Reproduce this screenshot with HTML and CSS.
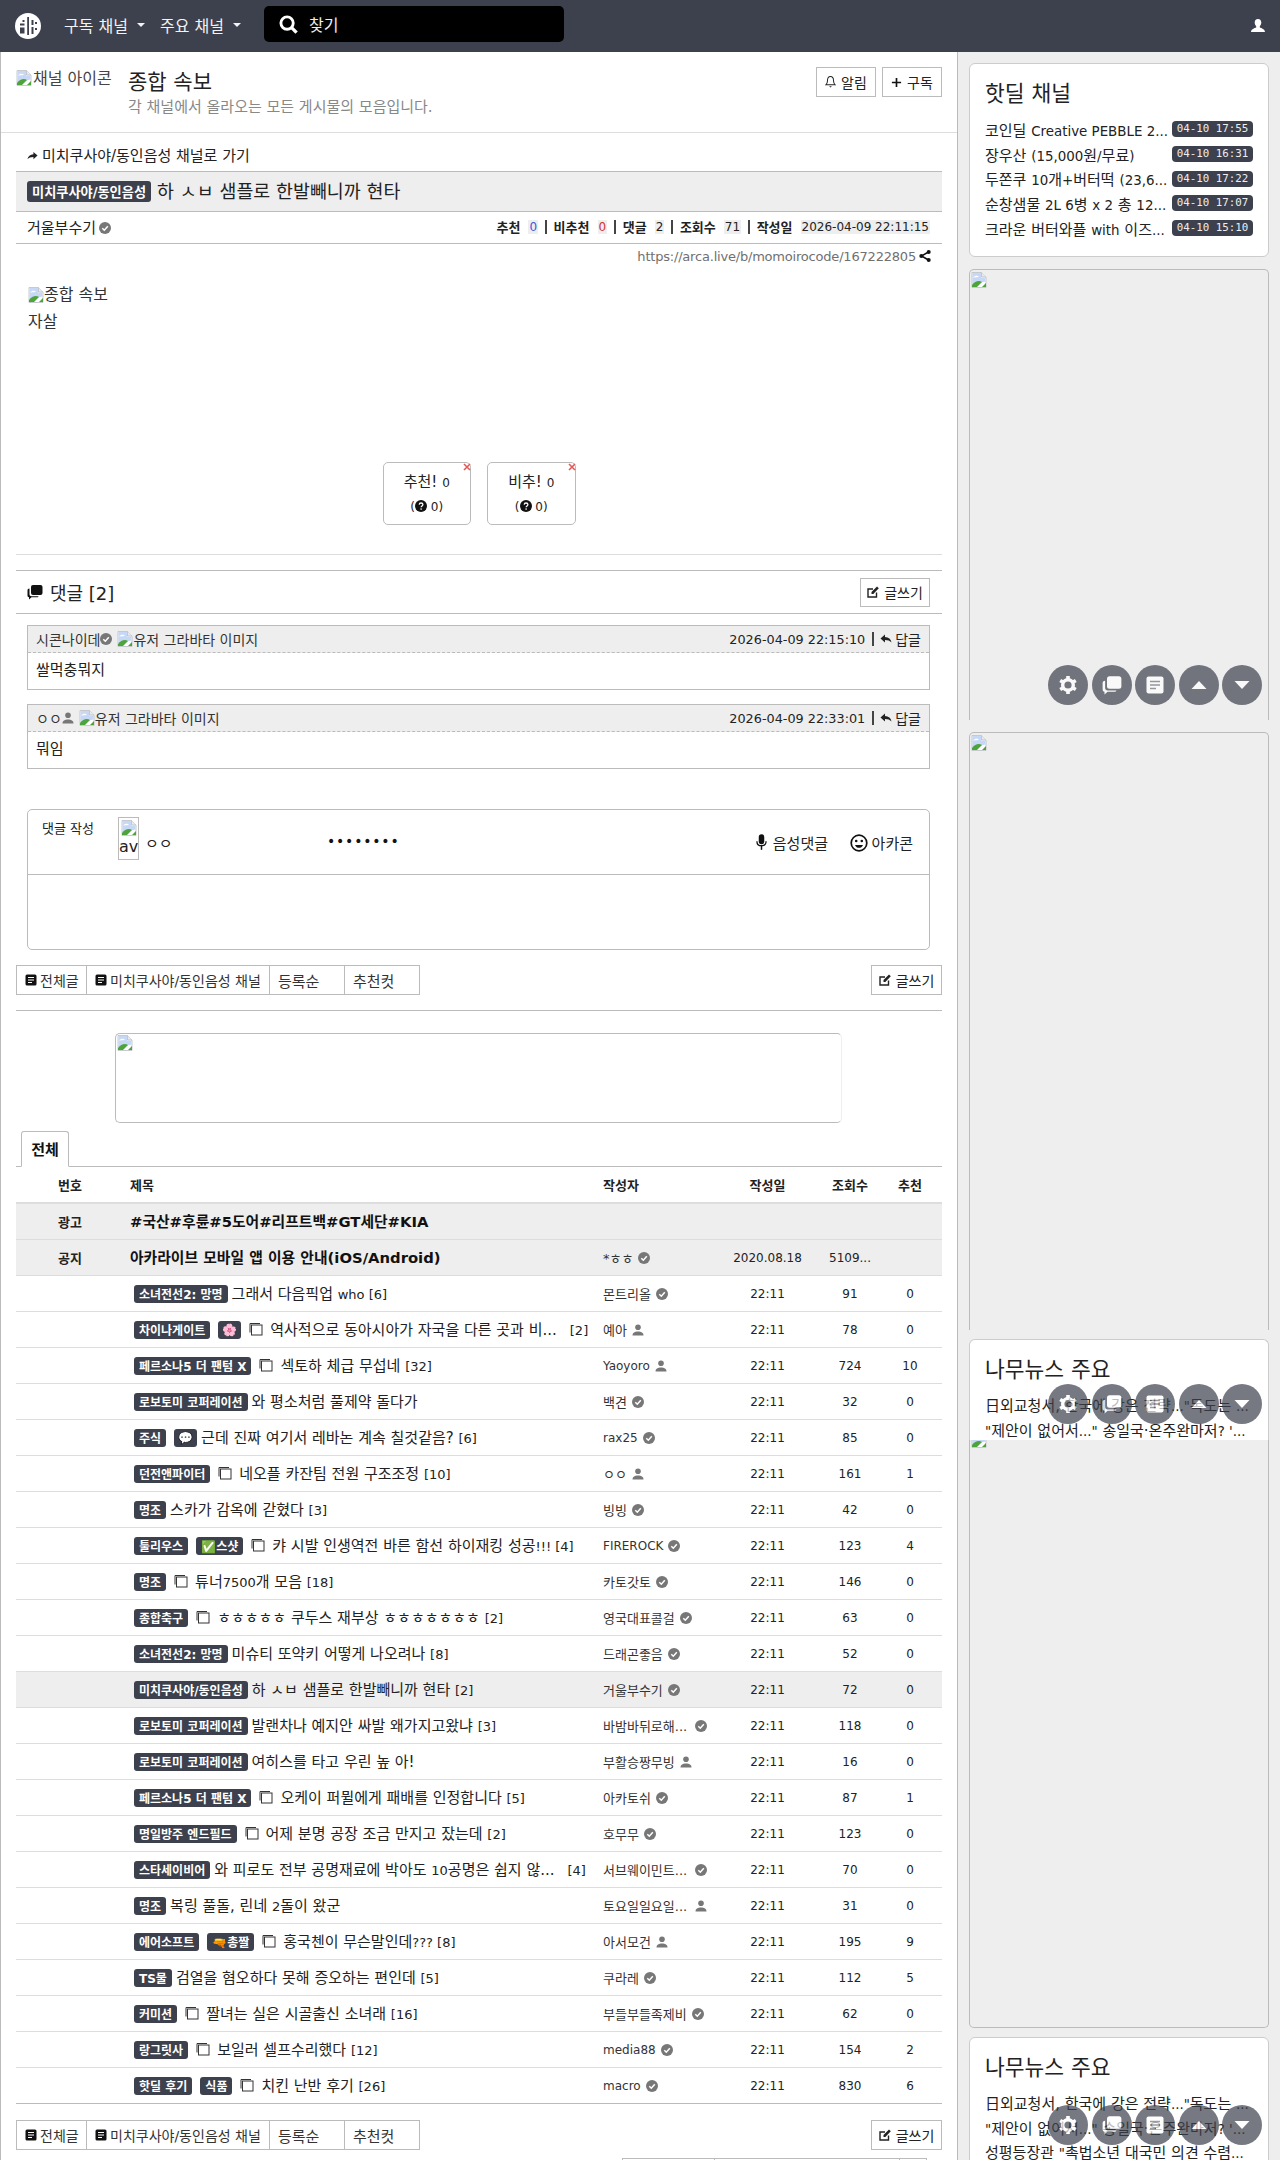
FILE: index.html
```html
<!DOCTYPE html>
<html lang="ko">
<head>
<meta charset="utf-8">
<title>종합 속보</title>
<link rel="stylesheet" href="styles.css">
</head>
<body>
<svg class="defs" xmlns="http://www.w3.org/2000/svg">
  <symbol id="i-broken" viewBox="0 0 16 16"><path d="M1 .5h9.500l4.500 4.500v10.500h-14z" fill="#fff" stroke="#b9bcc2" stroke-width=".8"/><path d="M10.500.5v4.500h4.500" fill="#e8eaee" stroke="#b9bcc2" stroke-width=".8"/><path d="M1.500 1h8.500v4.500h4.500v4l-13 3z" fill="#c6d8f6"/><path d="M2 5.500c2-2.500 5-2 6-.5-2 0-4 .5-6 .5z" fill="#fff"/><path d="M1 15v-2c3-4 7-5 10-3l-5 5z" fill="#4da33c"/><path d="M11 15l4-4v4z" fill="#4da33c"/></symbol>
  <symbol id="i-check" viewBox="0 0 12 12"><circle cx="6" cy="6" r="6" fill="#777"/><path d="M3.300 6.200l2 2 3.500-4" fill="none" stroke="#fff" stroke-width="1.500"/></symbol>
  <symbol id="i-user" viewBox="0 0 12 12"><circle cx="6" cy="3.200" r="2.800" fill="#777"/><path d="M.5 11.500c0-3 2.500-4 5.500-4s5.500 1 5.500 4z" fill="#777"/></symbol>
  <symbol id="i-pic" viewBox="0 0 14 14"><path d="M1 10.500V1.500h10" fill="none" stroke="#333" stroke-width="1"/><rect x="2.500" y="3" width="10.500" height="10" fill="#fff" stroke="#333" stroke-width="1"/></symbol>
  <symbol id="i-doc" viewBox="0 0 12 12"><rect x=".5" y=".5" width="11" height="11" rx="1.500" fill="#111"/><path d="M3 3.500h6M3 6h6M3 8.500h4" stroke="#fff" stroke-width="1.200"/></symbol>
  <symbol id="i-edit" viewBox="0 0 12 12"><path d="M9.500 6.500v4.500H1V3h5" fill="none" stroke="#222" stroke-width="1.400"/><path d="M4.500 8V6l5.500-5.500 1.800 1.800L6.300 8z" fill="#222"/></symbol>
  <symbol id="i-reply" viewBox="0 0 12 12"><path d="M5 1.500L.5 5.500 5 9.500V7c3 0 5 .8 6.500 2.500C11 6 8.500 4.200 5 4z" fill="#222"/></symbol>
  <symbol id="i-go" viewBox="0 0 12 12"><path d="M7 1.500l4.500 4-4.500 4V7C4 7 2 7.800.5 9.500 1 6 3.500 4.200 7 4z" fill="#222"/></symbol>
  <symbol id="i-share" viewBox="0 0 12 12"><path d="M9.500 2L2.500 6l7 4" fill="none" stroke="#111" stroke-width="1.500"/><circle cx="9.700" cy="2" r="2" fill="#111"/><circle cx="2.300" cy="6" r="2" fill="#111"/><circle cx="9.700" cy="10" r="2" fill="#111"/></symbol>
  <symbol id="i-bell" viewBox="0 0 12 14"><path d="M6 1c2.500 0 3.300 2 3.300 4.500 0 2.500.7 3.500 1.700 4.500H1c1-1 1.700-2 1.700-4.500C2.700 3 3.500 1 6 1z" fill="none" stroke="#222" stroke-width="1.100"/><path d="M4.500 11.500h3L6 13z" fill="#222"/></symbol>
  <symbol id="i-plus" viewBox="0 0 12 12"><path d="M6 1v10M1 6h10" stroke="#111" stroke-width="1.800"/></symbol>
  <symbol id="i-chat" viewBox="0 0 16 16"><rect x="4" y="1" width="11.500" height="10" rx="2" fill="currentColor"/><path d="M2.500 4.500C1 4.500.5 5.300.5 6.500v5c0 1 .5 1.700 1.500 1.800V15.500l2.500-2.200H10c1 0 1.500-.5 1.500-1H4.500c-1.200 0-2-.8-2-2z" fill="currentColor"/></symbol>
  <symbol id="i-mic" viewBox="0 0 12 18"><rect x="3" y="0" width="6" height="11" rx="3" fill="#111"/><path d="M1 7.500c0 3 2 5 5 5s5-2 5-5" fill="none" stroke="#111" stroke-width="1.400"/><path d="M6 12.500V17" stroke="#111" stroke-width="1.600"/></symbol>
  <symbol id="i-smile" viewBox="0 0 18 18"><circle cx="9" cy="9" r="7.800" fill="none" stroke="#111" stroke-width="1.700"/><circle cx="6.200" cy="7" r="1.300" fill="#111"/><circle cx="11.800" cy="7" r="1.300" fill="#111"/><path d="M5 11h8c-.8 2-2.300 2.800-4 2.800S5.800 13 5 11z" fill="#111"/></symbol>
  <symbol id="i-q" viewBox="0 0 12 12"><circle cx="6" cy="6" r="6" fill="#111"/><path d="M4.200 4.600C4.300 3.500 5 3 6 3c1.100 0 1.900.7 1.900 1.600 0 1.300-1.800 1.400-1.800 2.700" fill="none" stroke="#fff" stroke-width="1.300"/><circle cx="6.100" cy="9.100" r=".8" fill="#fff"/></symbol>
  <symbol id="i-x" viewBox="0 0 8 8"><path d="M1 1l6 6M7 1L1 7" stroke="#e05a5a" stroke-width="1.600"/></symbol>
  <symbol id="i-search" viewBox="0 0 20 20"><circle cx="8.500" cy="8.500" r="6.500" fill="none" stroke="#fff" stroke-width="3"/><path d="M13 13l5.500 5.500" stroke="#fff" stroke-width="3.500"/></symbol>
  <symbol id="i-me" viewBox="0 0 16 16"><path d="M8 1c2.200 0 3.300 1.500 3.300 3.600 0 1.700-.8 3-1.500 3.700v1.300c1.800.7 5 1.500 5.200 4.400H1c.2-2.900 3.400-3.700 5.200-4.400V8.300C5.500 7.600 4.700 6.300 4.700 4.600 4.700 2.500 5.800 1 8 1z" fill="#fff"/></symbol>
  <symbol id="i-gear" viewBox="0 0 20 20"><circle cx="10" cy="10" r="5.300" fill="none" stroke="#fff" stroke-width="3.400"/><path d="M10 1v3M10 16v3M2.200 5.500l2.600 1.500M15.200 13l2.600 1.500M2.200 14.500L4.800 13M15.200 7l2.600-1.500" stroke="#fff" stroke-width="3.600"/></symbol>
  <symbol id="i-note" viewBox="0 0 20 20"><rect x="1.500" y="1.500" width="17" height="17" rx="2" fill="#fff"/><path d="M5 6.500h10M5 10h10M5 13.500h6" stroke="#71737c" stroke-width="1.700"/></symbol>
  <symbol id="i-up" viewBox="0 0 16 10"><path d="M8 1l7.500 8H.5z" fill="#fff"/></symbol>
  <symbol id="i-down" viewBox="0 0 16 10"><path d="M8 9L.5 1h15z" fill="#fff"/></symbol>
</svg>

<header class="nav">
  <svg class="logo" viewBox="0 0 26 26"><circle cx="13" cy="13" r="13" fill="#fff"/><path d="M12.200 4v18h1.800V4zM5 10.500h4.500v2H5zM5 14.500h4.500v6H5zM7.500 7h2v2h-2zM16.500 7h2v5h-2zM16.500 14h2v7h-2zM20 9h2v2h-2zM20 15h2v2h-2z" fill="#3d414d"/></svg>
  <span class="nav-link">구독 채널<i class="caret"></i></span>
  <span class="nav-link nav-link-2">주요 채널<i class="caret"></i></span>
  <div class="search"><svg class="search-icon"><use href="#i-search"/></svg><span>찾기</span></div>
  <svg class="me"><use href="#i-me"/></svg>
</header>

<div class="page">
<main class="main">
  <section class="ch-head">
    <div class="ch-icon"><svg class="bk"><use href="#i-broken"/></svg>채널 아이콘</div>
    <div class="ch-text">
      <div class="ch-title">종합 속보</div>
      <div class="ch-desc">각 채널에서 올라오는 모든 게시물의 모음입니다.</div>
    </div>
    <div class="ch-btns">
      <span class="btn btn-h"><svg class="ic-bell"><use href="#i-bell"/></svg>알림</span>
      <span class="btn btn-h"><svg class="ic-plus"><use href="#i-plus"/></svg>구독</span>
    </div>
  </section>

  <section class="wrap">
    <div class="back"><svg class="ic12"><use href="#i-go"/></svg>미치쿠사야/동인음성 채널로 가기</div>
    <div class="art-title"><span class="bd">미치쿠사야/동인음성</span><span class="art-name">하 ㅅㅂ 샘플로 한발빼니까 현타</span></div>
    <div class="art-info">
      <span class="author">거울부수기<svg class="ic12 ml3"><use href="#i-check"/></svg></span>
      <div class="art-meta">
        <b>추천</b><em class="up">0</em><i class="sep"></i>
        <b>비추천</b><em class="dn">0</em><i class="sep"></i>
        <b>댓글</b><em>2</em><i class="sep"></i>
        <b>조회수</b><em>71</em><i class="sep"></i>
        <b>작성일</b><em>2026-04-09 22:11:15</em>
      </div>
    </div>
    <div class="art-link">https://arca.live/b/momoirocode/167222805<svg class="ic12 ml3"><use href="#i-share"/></svg></div>
    <div class="art-body">
      <div class="alt-img"><svg class="bk"><use href="#i-broken"/></svg>종합 속보</div>
      <div class="art-text">자살</div>
    </div>
    <div class="votes">
      <div class="vote"><svg class="vote-x"><use href="#i-x"/></svg><div class="v1">추천! <small>0</small></div><div class="v2">(<svg class="ic12"><use href="#i-q"/></svg> 0)</div></div>
      <div class="vote"><svg class="vote-x"><use href="#i-x"/></svg><div class="v1">비추! <small>0</small></div><div class="v2">(<svg class="ic12"><use href="#i-q"/></svg> 0)</div></div>
    </div>
    <hr class="hr-art">

    <div class="cm-head">
      <div class="cm-title"><svg class="ic-chat"><use href="#i-chat"/></svg>댓글 [2]</div>
      <span class="btn btn-w"><svg class="ic12"><use href="#i-edit"/></svg>글쓰기</span>
    </div>

    <article class="cm cm-1">
      <div class="cm-top">
        <span class="cm-user">시콘나이데<svg class="ic12"><use href="#i-check"/></svg><svg class="bk cm-ava"><use href="#i-broken"/></svg>유저 그라바타 이미지</span>
        <span class="cm-right">2026-04-09 22:15:10<i class="sep sep-cm"></i><svg class="ic12"><use href="#i-reply"/></svg><span class="reply">답글</span></span>
      </div>
      <div class="cm-body">쌀먹충뭐지</div>
    </article>
    <article class="cm cm-2">
      <div class="cm-top">
        <span class="cm-user">ㅇㅇ<svg class="ic12"><use href="#i-user"/></svg><svg class="bk cm-ava"><use href="#i-broken"/></svg>유저 그라바타 이미지</span>
        <span class="cm-right">2026-04-09 22:33:01<i class="sep sep-cm"></i><svg class="ic12"><use href="#i-reply"/></svg><span class="reply">답글</span></span>
      </div>
      <div class="cm-body">뭐임</div>
    </article>

    <div class="write">
      <div class="write-top">
        <span class="write-label">댓글 작성</span>
        <div class="avatar"><svg class="bk"><use href="#i-broken"/></svg><span>av</span></div>
        <span class="write-name">ㅇㅇ</span>
        <span class="write-pass">••••••••</span>
        <span class="write-act write-voice"><svg class="ic-mic"><use href="#i-mic"/></svg>음성댓글</span>
        <span class="write-act write-con"><svg class="ic-smile"><use href="#i-smile"/></svg>아카콘</span>
      </div>
      <div class="write-area"></div>
    </div>

    <div class="tools">
      <div class="tool-group">
        <span class="tool tool-a"><svg class="ic12"><use href="#i-doc"/></svg>전체글</span>
        <span class="tool tool-b"><svg class="ic12"><use href="#i-doc"/></svg>미치쿠사야/동인음성 채널</span>
        <span class="tool tool-c">등록순</span>
        <span class="tool tool-c">추천컷</span>
      </div>
      <span class="btn btn-w2"><svg class="ic12"><use href="#i-edit"/></svg>글쓰기</span>
    </div>
    <hr class="hr-tools">

    <div class="ad"><svg class="bk"><use href="#i-broken"/></svg></div>

    <div class="tabs"><span class="tab">전체</span></div>

    <div class="board">
      <div class="row row-head"><span class="c">번호</span><span class="t-head">제목</span><span>작성자</span><span class="c">작성일</span><span class="c">조회수</span><span class="c">추천</span></div>

      <div class="row row-gray"><span class="c b">광고</span><span class="t-bold">#국산#후륜#5도어#리프트백#GT세단#KIA</span><span></span><span></span><span></span><span></span></div>
      <div class="row row-gray"><span class="c b">공지</span><span class="t-bold">아카라이브 모바일 앱 이용 안내(iOS/Android)</span><span class="au">*ㅎㅎ<svg class="ic12"><use href="#i-check"/></svg></span><span class="c">2020.08.18</span><span class="c">5109...</span><span class="c"></span></div>

      <div class="row"><span></span><span class="t"><span class="bd">소녀전선2: 망명</span><span class="tx">그래서 다음픽업 <span class="lt">who [6]</span></span></span><span class="au">몬트리올<svg class="ic12"><use href="#i-check"/></svg></span><span class="c">22:11</span><span class="c">91</span><span class="c">0</span></div>
      <div class="row"><span></span><span class="t"><span class="bd">차이나게이트</span><span class="bd bd-e">🌸</span><svg class="pic"><use href="#i-pic"/></svg><span class="tx">역사적으로 동아시아가 자국을 다른 곳과 비...<span class="lt cnt">[2]</span></span></span><span class="au">예아<svg class="ic12"><use href="#i-user"/></svg></span><span class="c">22:11</span><span class="c">78</span><span class="c">0</span></div>
      <div class="row"><span></span><span class="t"><span class="bd">페르소나5 더 팬텀 X</span><svg class="pic"><use href="#i-pic"/></svg><span class="tx">섹토하 체급 무섭네 <span class="lt">[32]</span></span></span><span class="au lat">Yaoyoro<svg class="ic12"><use href="#i-user"/></svg></span><span class="c">22:11</span><span class="c">724</span><span class="c">10</span></div>
      <div class="row"><span></span><span class="t"><span class="bd">로보토미 코퍼레이션</span><span class="tx">와 평소처럼 풀제약 돌다가</span></span><span class="au">백견<svg class="ic12"><use href="#i-check"/></svg></span><span class="c">22:11</span><span class="c">32</span><span class="c">0</span></div>
      <div class="row"><span></span><span class="t"><span class="bd">주식</span><span class="bd bd-e">💬</span><span class="tx">근데 진짜 여기서 레바논 계속 칠것같음? <span class="lt">[6]</span></span></span><span class="au lat">rax25<svg class="ic12"><use href="#i-check"/></svg></span><span class="c">22:11</span><span class="c">85</span><span class="c">0</span></div>
      <div class="row"><span></span><span class="t"><span class="bd">던전앤파이터</span><svg class="pic"><use href="#i-pic"/></svg><span class="tx">네오플 카잔팀 전원 구조조정 <span class="lt">[10]</span></span></span><span class="au">ㅇㅇ<svg class="ic12"><use href="#i-user"/></svg></span><span class="c">22:11</span><span class="c">161</span><span class="c">1</span></div>
      <div class="row"><span></span><span class="t"><span class="bd">명조</span><span class="tx">스카가 감옥에 갇혔다 <span class="lt">[3]</span></span></span><span class="au">빙빙<svg class="ic12"><use href="#i-check"/></svg></span><span class="c">22:11</span><span class="c">42</span><span class="c">0</span></div>
      <div class="row"><span></span><span class="t"><span class="bd">툴리우스</span><span class="bd">✅스샷</span><svg class="pic"><use href="#i-pic"/></svg><span class="tx">캬 시발 인생역전 바른 함선 하이재킹 성공<span class="lt">!!! [4]</span></span></span><span class="au lat">FIREROCK<svg class="ic12"><use href="#i-check"/></svg></span><span class="c">22:11</span><span class="c">123</span><span class="c">4</span></div>
      <div class="row"><span></span><span class="t"><span class="bd">명조</span><svg class="pic"><use href="#i-pic"/></svg><span class="tx">튜너<span class="lt">7500</span>개 모음 <span class="lt">[18]</span></span></span><span class="au">카토갓토<svg class="ic12"><use href="#i-check"/></svg></span><span class="c">22:11</span><span class="c">146</span><span class="c">0</span></div>
      <div class="row"><span></span><span class="t"><span class="bd">종합축구</span><svg class="pic"><use href="#i-pic"/></svg><span class="tx">ㅎㅎㅎㅎㅎ 쿠두스 재부상 ㅎㅎㅎㅎㅎㅎㅎ <span class="lt">[2]</span></span></span><span class="au">영국대표콜걸<svg class="ic12"><use href="#i-check"/></svg></span><span class="c">22:11</span><span class="c">63</span><span class="c">0</span></div>
      <div class="row"><span></span><span class="t"><span class="bd">소녀전선2: 망명</span><span class="tx">미슈티 또약키 어떻게 나오려나 <span class="lt">[8]</span></span></span><span class="au">드래곤좋음<svg class="ic12"><use href="#i-check"/></svg></span><span class="c">22:11</span><span class="c">52</span><span class="c">0</span></div>
      <div class="row row-cur"><span></span><span class="t"><span class="bd">미치쿠사야/동인음성</span><span class="tx">하 ㅅㅂ 샘플로 한발빼니까 현타 <span class="lt">[2]</span></span></span><span class="au">거울부수기<svg class="ic12"><use href="#i-check"/></svg></span><span class="c">22:11</span><span class="c">72</span><span class="c">0</span></div>
      <div class="row"><span></span><span class="t"><span class="bd">로보토미 코퍼레이션</span><span class="tx">발랜차나 예지안 싸발 왜가지고왔냐 <span class="lt">[3]</span></span></span><span class="au">바밤바뒤로해...<svg class="ic12 au-gap"><use href="#i-check"/></svg></span><span class="c">22:11</span><span class="c">118</span><span class="c">0</span></div>
      <div class="row"><span></span><span class="t"><span class="bd">로보토미 코퍼레이션</span><span class="tx">여히스를 타고 우린 높 아!</span></span><span class="au">부활승짱무빙<svg class="ic12"><use href="#i-user"/></svg></span><span class="c">22:11</span><span class="c">16</span><span class="c">0</span></div>
      <div class="row"><span></span><span class="t"><span class="bd">페르소나5 더 팬텀 X</span><svg class="pic"><use href="#i-pic"/></svg><span class="tx">오케이 퍼뮐에게 패배를 인정합니다 <span class="lt">[5]</span></span></span><span class="au">아카토쉬<svg class="ic12"><use href="#i-check"/></svg></span><span class="c">22:11</span><span class="c">87</span><span class="c">1</span></div>
      <div class="row"><span></span><span class="t"><span class="bd">명일방주 엔드필드</span><svg class="pic"><use href="#i-pic"/></svg><span class="tx">어제 분명 공장 조금 만지고 잤는데 <span class="lt">[2]</span></span></span><span class="au">호무무<svg class="ic12"><use href="#i-check"/></svg></span><span class="c">22:11</span><span class="c">123</span><span class="c">0</span></div>
      <div class="row"><span></span><span class="t"><span class="bd">스타세이비어</span><span class="tx">와 피로도 전부 공명재료에 박아도 <span class="lt">10</span>공명은 쉽지 않...<span class="lt cnt">[4]</span></span></span><span class="au">서브웨이민트...<svg class="ic12 au-gap"><use href="#i-check"/></svg></span><span class="c">22:11</span><span class="c">70</span><span class="c">0</span></div>
      <div class="row"><span></span><span class="t"><span class="bd">명조</span><span class="tx">복링 풀돌, 린네 <span class="lt">2</span>돌이 왔군</span></span><span class="au">토요일일요일...<svg class="ic12 au-gap"><use href="#i-user"/></svg></span><span class="c">22:11</span><span class="c">31</span><span class="c">0</span></div>
      <div class="row"><span></span><span class="t"><span class="bd">에어소프트</span><span class="bd">🔫총짤</span><svg class="pic"><use href="#i-pic"/></svg><span class="tx">홍국첸이 무슨말인데<span class="lt">??? [8]</span></span></span><span class="au">아서모건<svg class="ic12"><use href="#i-user"/></svg></span><span class="c">22:11</span><span class="c">195</span><span class="c">9</span></div>
      <div class="row"><span></span><span class="t"><span class="bd">TS물</span><span class="tx">검열을 혐오하다 못해 증오하는 편인데 <span class="lt">[5]</span></span></span><span class="au">쿠라레<svg class="ic12"><use href="#i-check"/></svg></span><span class="c">22:11</span><span class="c">112</span><span class="c">5</span></div>
      <div class="row"><span></span><span class="t"><span class="bd">커미션</span><svg class="pic"><use href="#i-pic"/></svg><span class="tx">짤녀는 실은 시골출신 소녀래 <span class="lt">[16]</span></span></span><span class="au">부들부들족제비<svg class="ic12"><use href="#i-check"/></svg></span><span class="c">22:11</span><span class="c">62</span><span class="c">0</span></div>
      <div class="row"><span></span><span class="t"><span class="bd">랑그릿사</span><svg class="pic"><use href="#i-pic"/></svg><span class="tx">보일러 셀프수리했다 <span class="lt">[12]</span></span></span><span class="au lat">media88<svg class="ic12"><use href="#i-check"/></svg></span><span class="c">22:11</span><span class="c">154</span><span class="c">2</span></div>
      <div class="row row-last"><span></span><span class="t"><span class="bd">핫딜 후기</span><span class="bd">식품</span><svg class="pic"><use href="#i-pic"/></svg><span class="tx">치킨 난반 후기 <span class="lt">[26]</span></span></span><span class="au lat">macro<svg class="ic12"><use href="#i-check"/></svg></span><span class="c">22:11</span><span class="c">830</span><span class="c">6</span></div>
    </div>

    <div class="tools tools-bottom">
      <div class="tool-group">
        <span class="tool tool-a"><svg class="ic12"><use href="#i-doc"/></svg>전체글</span>
        <span class="tool tool-b"><svg class="ic12"><use href="#i-doc"/></svg>미치쿠사야/동인음성 채널</span>
        <span class="tool tool-c">등록순</span>
        <span class="tool tool-c">추천컷</span>
      </div>
      <span class="btn btn-w2"><svg class="ic12"><use href="#i-edit"/></svg>글쓰기</span>
    </div>
    <div class="pager"><span class="pg pg-1"></span><span class="pg pg-2"></span><span class="pg pg-3"></span></div>
  </section>
</main>

<aside class="side">
  <div class="card card-deal">
    <h3 class="card-title">핫딜 채널</h3>
    <ul class="deals">
      <li><span>코인딜 <span class="lt">Creative PEBBLE 2...</span></span><time>04-10 17:55</time></li>
      <li><span>장우산 <span class="lt">(15,000</span>원<span class="lt">/</span>무료<span class="lt">)</span></span><time>04-10 16:31</time></li>
      <li><span>두쫀쿠 <span class="lt">10</span>개<span class="lt">+</span>버터떡 <span class="lt">(23,6...</span></span><time>04-10 17:22</time></li>
      <li><span>순창샘물 <span class="lt">2L 6</span>병 <span class="lt">x 2</span> 총 <span class="lt">12...</span></span><time>04-10 17:07</time></li>
      <li><span>크라운 버터와플 <span class="lt">with</span> 이즈<span class="lt">...</span></span><time>04-10 15:10</time></li>
    </ul>
  </div>
  <div class="slot slot-1"><svg class="bk"><use href="#i-broken"/></svg></div>
  <div class="slot slot-2"><svg class="bk"><use href="#i-broken"/></svg></div>
  <div class="card card-news card-cut">
    <h3 class="card-title">나무뉴스 주요</h3>
    <ul class="news">
      <li>日외교청서, 한국에 강은 전략<span class="lt">..."</span>독도는 <span class="lt">...</span></li>
      <li><span class="lt">"</span>제안이 없어서<span class="lt">..."</span> 송일국·온주완마저<span class="lt">? '...</span></li>
    </ul>
  </div>
  <div class="slot slot-3"><svg class="bk"><use href="#i-broken"/></svg></div>
  <div class="card card-news">
    <h3 class="card-title">나무뉴스 주요</h3>
    <ul class="news">
      <li>日외교청서, 한국에 강은 전략<span class="lt">..."</span>독도는 <span class="lt">...</span></li>
      <li><span class="lt">"</span>제안이 없어서<span class="lt">..."</span> 송일국·온주완마저<span class="lt">? '...</span></li>
      <li>성평등장관 <span class="lt">"</span>촉법소년 대국민 의견 수렴<span class="lt">...</span></li>
    </ul>
  </div>
</aside>
</div>

<div class="fab fab-1"><span class="fb"><svg class="fi"><use href="#i-gear"/></svg></span><span class="fb fb-w"><svg class="fi"><use href="#i-chat"/></svg></span><span class="fb"><svg class="fi"><use href="#i-note"/></svg></span><span class="fb"><svg class="fa"><use href="#i-up"/></svg></span><span class="fb"><svg class="fa"><use href="#i-down"/></svg></span></div>
<div class="fab fab-2"><span class="fb"><svg class="fi"><use href="#i-gear"/></svg></span><span class="fb fb-w"><svg class="fi"><use href="#i-chat"/></svg></span><span class="fb"><svg class="fi"><use href="#i-note"/></svg></span><span class="fb"><svg class="fa"><use href="#i-up"/></svg></span><span class="fb"><svg class="fa"><use href="#i-down"/></svg></span></div>
<div class="fab fab-3"><span class="fb"><svg class="fi"><use href="#i-gear"/></svg></span><span class="fb fb-w"><svg class="fi"><use href="#i-chat"/></svg></span><span class="fb"><svg class="fi"><use href="#i-note"/></svg></span><span class="fb"><svg class="fa"><use href="#i-up"/></svg></span><span class="fb"><svg class="fa"><use href="#i-down"/></svg></span></div>
</body>
</html>
```

FILE: styles.css
```css
* { box-sizing: border-box; }
html, body { margin: 0; padding: 0; }
body {
  font-family: "DejaVu Sans", "Noto Sans CJK KR", sans-serif;
  font-size: 14px;
  color: #111;
  background: #eee;
  position: relative;
}
.defs { display: none; }
svg { flex: none; }
.bk { width: 16px; height: 16px; vertical-align: top; }
.ic12 { width: 12px; height: 12px; vertical-align: -1px; }
.ml3 { margin-left: 3px; }
.lt { font-size: 13px; }

/* nav */
.nav { height: 52px; background: #3d414d; display: flex; align-items: center; color: #fff; position: relative; }
.logo { width: 26px; height: 26px; margin-left: 15px; }
.nav-link { margin-left: 23px; margin-bottom: 2px; font-size: 16px; color: #f3f3f3; display: flex; align-items: center; }
.nav-link-2 { margin-left: 0; position: absolute; left: 160px; }
.caret { width: 0; height: 0; border: 4px solid transparent; border-top-color: #f3f3f3; border-bottom: 0; margin-left: 9px; }
.search { position: absolute; left: 264px; top: 6px; width: 300px; height: 36px; background: #000; border-radius: 5px; display: flex; align-items: center; font-size: 16px; color: #eee; }
.search-icon { width: 19px; height: 19px; margin-left: 15px; margin-right: 11px; }
.me { width: 16px; height: 16px; margin-left: auto; margin-right: 14px; }

/* page */
.page { display: flex; align-items: stretch; }
.main { width: 958px; flex: none; background: #fff; border-left: 1px solid #bbb; border-right: 1px solid #bbb; }
.wrap { margin: 0 15px; }

.ch-head { height: 81px; border-bottom: 1px solid #ddd; display: flex; position: relative; }
.ch-icon { position: absolute; left: 15px; top: 16px; width: 96px; height: 22px; overflow: hidden; white-space: nowrap; color: #444; font-size: 16px; line-height: 22px; }
.ch-icon .bk { vertical-align: -2px; margin-right: 1px; }
.ch-text { margin-left: 127px; padding-top: 17px; }
.ch-title { font-size: 21px; line-height: 26px; color: #222; }
.ch-desc { font-size: 15px; line-height: 18px; margin-top: 3px; color: #888; }
.ch-btns { margin-left: auto; margin-right: 15px; padding-top: 15px; display: flex; gap: 6px; }
.btn { display: inline-flex; align-items: center; justify-content: center; border: 1px solid #bbb; background: #fff; font-size: 14px; color: #222; gap: 5px; }
.btn-h { width: 60px; height: 30px; }
.ic-bell { width: 11px; height: 14px; }
.ic-plus { width: 11px; height: 11px; }

.back { height: 38px; padding: 14px 0 0 11px; font-size: 15px; line-height: 18px; color: #222; }
.back .ic12 { margin-right: 4px; vertical-align: -1px; width: 11px; }
.art-title { height: 41px; background: #eee; border-top: 1px solid #bbb; border-bottom: 1px solid #bbb; display: flex; align-items: center; padding-left: 11px; font-size: 18.400px; color: #222; }
.art-name { margin-bottom: 3px; }
.bd { display: inline-flex; align-items: center; height: 18px; padding: 0 5px; background: #3d414d; color: #fff; font-size: 12px; font-weight: 700; border-radius: 3px; margin-right: 4px; white-space: nowrap; flex: none; }
.bd-e { padding: 0 4px; }
.art-title .bd { height: 21px; font-size: 13.200px; margin-right: 6px; }
.art-info { height: 32px; border-bottom: 1px solid #bbb; display: flex; align-items: center; justify-content: space-between; padding: 0 12px 2px 11px; font-size: 15px; }
.author { color: #222; }
.art-meta { display: flex; align-items: center; font-size: 12px; color: #222; }
.art-meta b { margin-right: 8px; font-size: 13px; }
.art-meta em { font-style: normal; background: #eee; padding: 0 1px; }
.art-meta .up { color: #3b5bdb; }
.art-meta .dn { color: #d03434; }
.sep { display: inline-block; width: 2px; height: 14px; background: #444; margin: 0 6.800px; }
.art-link { height: 26px; display: flex; align-items: center; justify-content: flex-end; padding: 0 11px 2px 0; font-size: 13px; color: #707070; letter-spacing: -.2px; }
.art-body { height: 84px; padding: 15px 0 0 12px; color: #333; font-size: 16px; }
.alt-img { height: 20px; line-height: 20px; display: flex; align-items: center; }
.art-text { margin-top: 7px; line-height: 20px; }
.votes { display: flex; justify-content: center; gap: 16px; margin-top: 108px; }
.vote { width: 88.500px; height: 63px; border: 1px solid #bbb; border-radius: 5px; position: relative; text-align: center; color: #222; }
.vote-x { position: absolute; right: -1px; top: 0; width: 8px; height: 8px; }
.v1 { font-size: 15px; line-height: 20px; margin-top: 9px; }
.v1 small { font-size: 12px; }
.v2 { font-size: 12px; line-height: 16px; margin-top: 6px; }
.hr-art { border: 0; border-top: 1px solid #ddd; margin: 29px 0 0; }

.cm-head { margin-top: 15px; height: 44px; border-top: 1px solid #bbb; border-bottom: 1px solid #bbb; display: flex; align-items: center; justify-content: space-between; padding: 0 12px 0 11px; }
.cm-title { font-size: 18px; color: #222; display: flex; align-items: center; gap: 7px; }
.ic-chat { width: 16px; height: 16px; color: #111; }
.btn-w { width: 70px; height: 29px; }
.cm { margin: 11px 12px 0 11px; border: 1px solid #bbb; }
.cm-2 { margin-top: 14px; }
.cm-1 { height: 65px; }
.cm-2 { height: 65px; }
.cm-top { height: 27px; background: #eee; border-bottom: 1px dashed #bbb; display: flex; justify-content: space-between; align-items: center; padding: 0 8px; font-size: 14px; color: #333; }
.cm-user { display: flex; align-items: center; }
.cm-ava { margin-left: 5px; }
.cm-right { display: flex; align-items: center; font-size: 12.800px; color: #222; }
.reply { margin-left: 3px; font-size: 14px; }
.sep-cm { margin: 0 6px 0 7px; }
.cm-body { padding: 7px 8px; font-size: 15px; line-height: 20px; color: #222; }

.write { margin: 40px 12px 0 11px; height: 141px; border: 1px solid #bbb; border-radius: 5px; }
.write-top { height: 65px; border-bottom: 1px solid #bbb; position: relative; font-size: 13px; }
.write-label { position: absolute; left: 14px; top: 8px; font-size: 13px; color: #222; }
.avatar { position: absolute; left: 90px; top: 7px; width: 21px; height: 43px; border: 1px solid #bbb; overflow: hidden; font-size: 16px; line-height: 22px; color: #222; }
.avatar .bk { display: block; margin: 2px 0 0 2px; }
.write-name { position: absolute; left: 117px; top: 22px; color: #222; font-size: 15px; }
.write-pass { position: absolute; left: 299px; top: 23px; font-size: 14px; letter-spacing: .8px; }
.write-act { position: absolute; top: 22px; display: flex; align-items: center; color: #222; font-size: 15px; }
.write-voice { right: 101px; gap: 6px; }
.write-con { right: 16px; gap: 4px; }
.ic-mic { width: 11px; height: 17px; }
.ic-smile { width: 18px; height: 18px; }

.tools { display: flex; justify-content: space-between; margin-top: 15px; }
.tool-group { display: flex; }
.tool { height: 30px; border: 1px solid #bbb; margin-right: -1px; display: flex; align-items: center; font-size: 14px; color: #333; background: #fff; }
.tool .ic12 { margin-right: 3px; }
.tool-a { width: 71px; padding-left: 8px; }
.tool-b { width: 184px; padding-left: 8px; }
.tool-c { width: 76px; padding-left: 8px; font-size: 15px; }
.btn-w2 { width: 71px; height: 30px; }
.hr-tools { border: 0; border-top: 1px solid #bbb; margin: 15px 0 0; }

.ad { width: 727px; height: 90px; margin: 22px 0 0 99px; border: 1px solid #bbb; border-right-color: #eee; border-radius: 5px; }
.ad .bk { display: block; margin: 1px 0 0 1px; }
.tabs { height: 36px; margin-top: 8px; border-bottom: 1px solid #bbb; padding-left: 5px; display: flex; }
.tab { display: flex; align-items: center; justify-content: center; width: 48px; height: 36px; padding-bottom: 2px; border: 1px solid #bbb; border-bottom-color: #fff; border-radius: 3px 3px 0 0; background: #fff; font-weight: 700; font-size: 15px; }

.row { display: grid; grid-template-columns: 108px 479px 117px 95px 70px 50px 7px; height: 36px; align-items: center; border-bottom: 1px solid #ddd; font-size: 12px; color: #222; }
.row-head { height: 37px; border-bottom: 2px solid #ddd; font-weight: 700; font-size: 13px; }
.row-gray { background: #eee; }
.row-cur { background: #eee; }
.row-last { border-bottom-color: #bbb; }
.c { text-align: center; }
.b { font-weight: 700; font-size: 13px; }
.t-head { padding-left: 6px; }
.t-bold { padding: 0 0 2px 6px; font-weight: 700; font-size: 14.800px; color: #111; }
.t { padding-left: 10px; display: flex; align-items: center; font-size: 15px; white-space: nowrap; overflow: hidden; color: #222; }
.tx { display: block; margin-bottom: 2px; }
.bd + .bd { margin-left: 4px; }
.pic { width: 14px; height: 14px; margin: 0 7px 2px 4px; }
.cnt { margin-left: 13px; }
.au { display: flex; align-items: center; color: #333; white-space: nowrap; font-size: 13px; }
.au.lat { font-size: 12px; }
.au .ic12 { margin-left: 5px; }
.au .au-gap { margin-left: 8px; }

.tools-bottom { margin-top: 16px; }
.pager { display: flex; margin: 8px 0 0 606px; height: 30px; }
.pg { border: 1px solid #bbb; height: 30px; margin-right: -1px; }
.pg-1 { width: 93px; }
.pg-2 { width: 186px; }
.pg-3 { width: 28px; }

/* sidebar */
.side { flex: 1; padding: 11px 11px 0; min-width: 0; }
.card { width: 300px; background: #fff; border: 1px solid #ccc; border-radius: 6px; padding: 0 15px; }
.card-title { margin: 0; padding-top: 17px; font-size: 21.500px; line-height: 26px; font-weight: 400; color: #222; }
.card-deal { height: 194px; }
.card .lt { font-size: 13.400px; }
.deals { list-style: none; margin: 10px 0 0; padding: 0; }
.deals li { height: 24.700px; display: flex; align-items: center; justify-content: space-between; font-size: 15px; color: #222; white-space: nowrap; }
.deals time { display: block; width: 81px; height: 16px; line-height: 16px; flex: none; background: #3d414d; color: #eee; border-radius: 4px; text-align: center; font-family: "DejaVu Sans Mono", monospace; font-size: 10.800px; }
.slot { width: 300px; background: #eee; border: 1px solid #bbb; border-bottom: 0; border-radius: 5px 5px 0 0; }
.slot .bk { display: block; margin: 2px 0 0 1px; }
.slot-1 { height: 451px; margin-top: 12px; }
.slot-2 { height: 598px; margin-top: 12px; }
.slot-3 { height: 588px; border-bottom: 1px solid #bbb; border-radius: 0 0 5px 5px; border-top: 0; overflow: hidden; }
.slot .bk { margin-top: 2px; }
.slot-3 .bk { margin-top: -8px; }
.card-news { margin-top: 9px; overflow: hidden; }
.card-cut { height: 101px; border-bottom: 0; border-radius: 6px 6px 0 0; }
.news { list-style: none; margin: 11px 0 0; padding: 0; }
.news li { height: 24.600px; line-height: 24.600px; font-size: 15px; white-space: nowrap; color: #222; }

/* floating buttons */
.fab { position: absolute; left: 1048px; display: flex; gap: 3.600px; opacity: .7; }
.fab-1 { top: 665px; }
.fab-2 { top: 1384px; }
.fab-3 { top: 2105px; }
.fb { width: 40px; height: 40px; border-radius: 50%; background: #3d414d; display: flex; align-items: center; justify-content: center; }
.fi { width: 20px; height: 20px; }
.fb-w { color: #fff; }
.fa { width: 16px; height: 10px; }
```
